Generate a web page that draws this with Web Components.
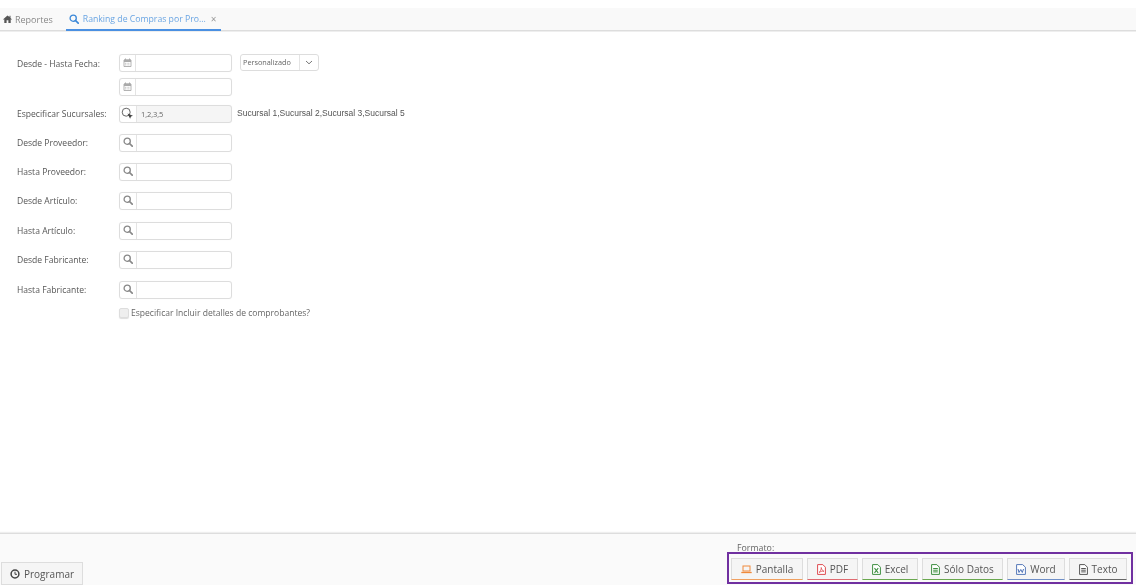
<!DOCTYPE html>
<html lang="es"><head><meta charset="utf-8"><title>Ranking de Compras</title>
<style>
html,body{margin:0;padding:0;height:585px;overflow:hidden;background:#fff}
body{font-family:"Open Sans",sans-serif;color:#555}
</style></head><body>
<app-page>
  <tab-bar></tab-bar>
  <form-area>
    <form-row label="Desde - Hasta Fecha:" icon="cal" gap="7" low><select-box slot="after">Personalizado</select-box></form-row>
    <form-row icon="cal" gap="10"></form-row>
    <form-row label="Especificar Sucursales:" icon="multi" value="1,2,3,5" disabled gap="12"><span slot="after" style="font:8.5px 'Liberation Sans',sans-serif;color:#555;margin-left:-3px;white-space:nowrap;position:relative;top:-1px">Sucursal 1,Sucursal 2,Sucursal 3,Sucursal 5</span></form-row>
    <form-row label="Desde Proveedor:" icon="search" gap="12"></form-row>
    <form-row label="Hasta Proveedor:" icon="search" gap="12"></form-row>
    <form-row label="Desde Artículo:" icon="search" gap="13"></form-row>
    <form-row label="Hasta Artículo:" icon="search" gap="12"></form-row>
    <form-row label="Desde Fabricante:" icon="search" gap="13"></form-row>
    <form-row label="Hasta Fabricante:" icon="search" gap="9"></form-row>
    <check-row>Especificar Incluir detalles de comprobantes?</check-row>
  </form-area>
  <foot-bar>
    <action-btn slot="left" icon="clock" size="big">Programar</action-btn>
    <action-btn slot="right" icon="laptop" accent="#f0a060" w="72">Pantalla</action-btn>
    <action-btn slot="right" icon="pdf" accent="#e06a70" w="51">PDF</action-btn>
    <action-btn slot="right" icon="xls" accent="#6aa84f" w="56">Excel</action-btn>
    <action-btn slot="right" icon="doc" accent="#6aa84f" w="81" ic="#3e8e41">Sólo Datos</action-btn>
    <action-btn slot="right" icon="word" accent="#6f8fc8" w="58">Word</action-btn>
    <action-btn slot="right" icon="doc" accent="#666" w="58" ic="#555">Texto</action-btn>
  </foot-bar>
</app-page>
<script>
const ICONS={
 cal:(c='#aaa')=>`<svg width="9" height="9" viewBox="0 0 9 9"><path d="M1 2h7v6.500H1z" fill="none" stroke="${c}" stroke-width=".9"/><path d="M1 1.500h7V4H1z" fill="${c}"/><path d="M2.500 .5v1.500M6.500 .5v1.500" stroke="${c}"/><path d="M2 5.300h5M2 6.900h5" stroke="${c}" stroke-width=".7" stroke-dasharray="1 .6"/></svg>`,
 search:(c='#888')=>`<svg width="10" height="10" viewBox="0 0 10 10"><circle cx="4.200" cy="4.200" r="3.100" fill="none" stroke="${c}" stroke-width="1.300"/><path d="M6.500 6.500L9.200 9.200" stroke="${c}" stroke-width="1.700" stroke-linecap="round"/></svg>`,
 multi:()=>`<svg width="13" height="13" viewBox="0 0 13 13"><circle cx="5.200" cy="5.200" r="4" fill="none" stroke="#666" stroke-width="1"/><path d="M8 8l1.500 1.500" stroke="#666" stroke-width="1.400"/><path d="M6.500 6.500l5.500 2.200-2 .8-.9 2.200z" fill="#444"/></svg>`,
 chev:()=>`<svg width="8" height="5" viewBox="0 0 8 5"><path d="M1 1l3 2.800L7 1" fill="none" stroke="#777" stroke-width="1"/></svg>`,
 home:()=>`<svg width="9" height="8" viewBox="0 0 9 8"><path d="M4.500 .5L.2 4.300l.5.500L1.300 4.300V8h2.300V5.300h1.800V8h2.300V4.300l.6.500.5-.5L7.500 2.900V.8H6.500v1.200z" fill="#555"/></svg>`,
 clock:()=>`<svg width="10" height="10" viewBox="0 0 10 10"><circle cx="5" cy="5" r="3.900" fill="none" stroke="#444" stroke-width="1.500"/><path d="M5 2.700V5.300H7" fill="none" stroke="#444" stroke-width="1"/></svg>`,
 laptop:()=>`<svg width="11" height="9" viewBox="0 0 11 9"><rect x="2" y="1" width="7" height="5" fill="none" stroke="#f08a3c" stroke-width="1"/><path d="M.3 7.500h10.400" stroke="#f08a3c" stroke-width="1.300"/></svg>`,
 pdf:()=>`<svg width="9" height="11" viewBox="0 0 9 11"><path d="M.6.600h5.200l2.600 2.600v7.200H.6z" fill="#fff" stroke="#dd4b50"/><path d="M2 8.500C3.500 7.500 4.500 5 4.200 3.500 4.700 5.500 5.500 7 7 7.300 5 7 3.500 7.500 2 8.500z" fill="none" stroke="#dd4b50" stroke-width=".8"/></svg>`,
 xls:()=>`<svg width="9" height="11" viewBox="0 0 9 11"><path d="M.6.600h5.200l2.600 2.600v7.200H.6z" fill="#fff" stroke="#3e8e41"/><path d="M2.500 4.200l3.700 4.600M6.200 4.200L2.500 8.800" stroke="#3e8e41" stroke-width="1.100"/></svg>`,
 word:()=>`<svg width="10" height="11" viewBox="0 0 10 11"><path d="M.6.600h6l2.800 2.600v7.200H.6z" fill="#fff" stroke="#5578b8"/><path d="M2 5l1 3.500L4.800 5.500 6.300 8.500 7.500 5" fill="none" stroke="#4a6fb5" stroke-width="1"/></svg>`,
 doc:(c='#555')=>`<svg width="9" height="11" viewBox="0 0 9 11"><path d="M.6.600h5.200l2.600 2.600v7.200H.6z" fill="#fff" stroke="${c}"/><path d="M2.200 4.500h4.600M2.200 6.200h4.600M2.200 7.900h4.600" stroke="${c}" stroke-width="1"/></svg>`
};
function def(name,css,html){
  customElements.define(name,class extends HTMLElement{
    connectedCallback(){
      if(this.shadowRoot)return;
      const s=this.attachShadow({mode:'open'});
      s.innerHTML=`<style>${css}</style>`+(typeof html==='function'?html(this):html);
    }
  });
}
def('app-page',`:host{display:flex;flex-direction:column;height:585px;padding-top:8px;box-sizing:border-box;filter:blur(.5px)}`,`<slot></slot>`);
def('tab-bar',`:host{display:flex;height:23px;flex:none;background:#f9f9f9;border-bottom:1px solid #ddd;box-sizing:border-box;box-shadow:0 1px 0 #eee;font-size:9px;color:#888;padding-left:3px;align-items:stretch}
.t{display:flex;align-items:center;gap:3px;white-space:nowrap}
.t svg{flex:none}
.a{margin-left:13px;font-size:8.700px;color:#6aa5e3;border-bottom:2px solid #4a90e2;margin-bottom:-1px;padding:0 0 0 3px;width:155px;box-sizing:border-box;gap:4px}
.x{color:#999;font-size:10px;margin-left:1px}`,
`<div class="t">${ICONS.home()}<span>Reportes</span></div><div class="t a">${ICONS.search('#3b88d8')}<span>Ranking de Compras por Pro...</span><span class="x">×</span></div>`);
def('form-area',`:host{display:block;flex:1;padding:23px 0 0 17px;box-sizing:border-box}`,`<slot></slot>`);
def('form-row',`:host{display:flex;align-items:flex-start;font-size:8.550px;color:#555;height:17px}
.l{width:102px;flex:none;white-space:nowrap;line-height:17px;padding-top:1px}
.l.t{padding-top:2px}
.i{display:flex;width:113px;height:17.500px;flex:none;box-sizing:border-box;border:1px solid #ddd;border-radius:3px;background:#fff;box-shadow:0 0 1px #eee}
.a{width:16px;flex:none;box-sizing:border-box;padding:0 1px 1px 0;display:flex;align-items:center;justify-content:center;border-right:1px solid #e4e4e4}
.a.w{width:17px}
.v{flex:1;font-size:7.500px;line-height:16px;padding-left:4px;color:#666;letter-spacing:-.1px}
.d{background:#f5f5f5}
.d .a{background:#fff;border-radius:3px 0 0 3px}
.after{display:flex;align-items:center;height:17px;margin-left:8px}`,
h=>{const ic=h.getAttribute('icon'),d=h.hasAttribute('disabled'),lab=h.getAttribute('label')||'';
h.style.marginBottom=(h.getAttribute('gap')||10)+'px';
return `<div class="l ${h.hasAttribute('low')?'t':''}">${lab}</div><div class="i ${d?'d':''}"><div class="a ${ic!=='cal'?'w':''}">${ICONS[ic]()}</div><div class="v">${h.getAttribute('value')||''}</div></div><div class="after"><slot name="after"></slot></div>`});
def('select-box',`:host{display:flex;width:79px;height:17px;box-sizing:border-box;border:1px solid #ddd;border-radius:3px;font-size:7.300px;color:#666}
.t{flex:1;line-height:15px;padding-left:2px;white-space:nowrap}
.c{width:18px;border-left:1px solid #e4e4e4;display:flex;align-items:center;justify-content:center}`,
`<div class="t"><slot></slot></div><div class="c">${ICONS.chev()}</div>`);
def('check-row',`:host{display:flex;align-items:center;gap:2px;margin:0 0 0 102px;font-size:8.550px;color:#666;height:11px}
.b{width:10px;height:10px;box-sizing:border-box;border:1px solid #ddd;border-radius:2px;background:#eee;box-shadow:0 1px 1px #ddd}`,`<div class="b"></div><span><slot></slot></span>`);
def('foot-bar',`:host{display:flex;flex:none;height:52px;box-sizing:border-box;background:#fafafa;border-top:1px solid #ddd;box-shadow:0 -1px 1px #eee;justify-content:space-between;align-items:flex-end;padding:0 3px 1px 1px}
.r{position:relative}
.f{font-size:8.800px;color:#666;line-height:9px;padding-left:10px;margin-bottom:-1px}
.box{display:flex;gap:4px;border:2px solid #7030a0;padding:4px 4px 2px 2px;height:32px;box-sizing:border-box;background:#fafafa}
.L{display:flex;margin-bottom:-1px}`,
`<div class="L"><slot name="left"></slot></div><div class="r"><div class="f">Formato:</div><div class="box"><slot name="right"></slot></div></div>`);
def('action-btn',`:host{display:flex;align-items:center;justify-content:center;gap:4px;box-sizing:border-box;height:22px;background:#f5f5f5;border:1px solid #ddd;font-size:10px;color:#555;white-space:nowrap}`,
h=>{const a=h.getAttribute('accent'),w=h.getAttribute('w'),ic=h.getAttribute('icon');
if(a)h.style.borderBottom='1.500px solid '+a;
if(w)h.style.width=w+'px';
if(h.getAttribute('size')==='big'){h.style.width='82px';h.style.height='23px';}
return `${ICONS[ic](h.getAttribute('ic')||undefined)}<span><slot></slot></span>`});
</script>
</body></html>
